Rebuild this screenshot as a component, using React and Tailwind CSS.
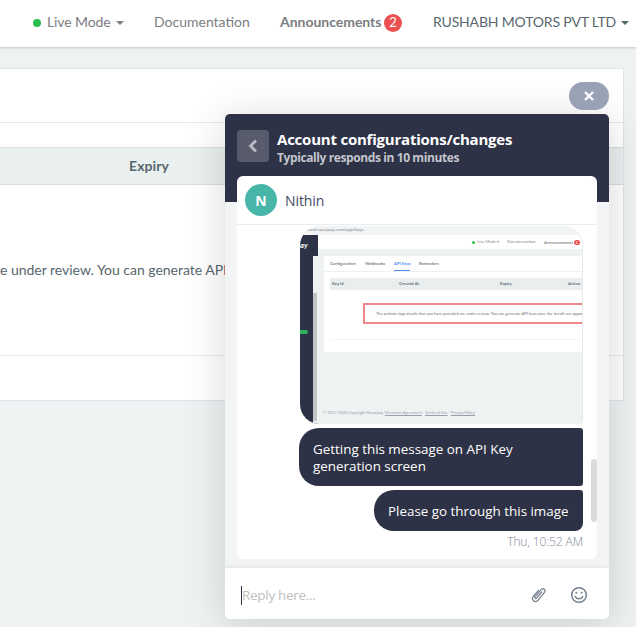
import React from "react";

function Caret({ className }) {
  return (
    <svg width="8" height="4" viewBox="0 0 8 4" className={className}>
      <path d="M0 0h8L4 4z" fill="currentColor" />
    </svg>
  );
}

function Navbar() {
  return (
    <header className="flex h-12 shrink-0 items-center whitespace-nowrap border-b border-[#d3d6d8] bg-white pb-1 pl-[33px] text-[14px] text-[#7b7d7f] shadow-[0_1px_1px_rgba(0,0,0,0.06)]">
      <span className="mt-0.5 size-2 rounded-full bg-[#28bf50]" />
      <span className="ml-[6px] w-[69px] tracking-[-0.1px]">Live Mode</span>
      <Caret className="mt-0.5" />
      <span className="ml-[30px] w-[126px]">Documentation</span>
      <span className="w-[104px] font-bold tracking-[-0.03px]">Announcements</span>
      <span className="mt-0.5 flex size-[18px] items-center justify-center rounded-full bg-[#ea5050] text-[13px] text-white">2</span>
      <span className="ml-[31px] w-[188px] tracking-[-0.17px] text-[#58666e]">RUSHABH MOTORS PVT LTD</span>
      <Caret className="mt-0.5 shrink-0 text-[#58666e]" />
    </header>
  );
}

function KeysPanel() {
  return (
    <main className="mt-5 mr-3 flex h-[333px] flex-col border border-l-0 border-[#dee5e7] bg-white text-[14px] text-[#58666e]">
      <div className="h-[54px] shrink-0 border-b border-[#e4eaec]" />
      <div className="mt-6 flex h-[38px] shrink-0 items-center border-y border-[#d5dfde] bg-[#e9f0ef] pb-0.5 pl-[129px] font-bold tracking-[0.1px]">Expiry</div>
      <div className="flex h-[171px] shrink-0 items-center whitespace-nowrap border-b border-[#e6ecec] pb-0.5">
        <span className="tracking-[-0.02px]">e under review. You can generate API</span>
      </div>
    </main>
  );
}

function Thumbnail() {
  return (
    <div className="ml-[63px] mt-px flex h-[198px] w-[283px] shrink-0 flex-col overflow-hidden whitespace-nowrap rounded-l-[20px] rounded-tr-[20px] rounded-br-[4px] border-r border-[#e6eaec] bg-[#eef2f3] font-[Lato,sans-serif] text-[4px] leading-none text-[#6c7177]">
      <div className="h-[9px] shrink-0 bg-[#f1f3f4] pl-[4px] pt-[2px] font-['Open_Sans',sans-serif] text-[4.2px] tracking-[0.03px]">board.razorpay.com/app/keys</div>
      <div className="flex h-[189px]">
        <div className="flex w-[18px] shrink-0 flex-col bg-[#2e3246]">
          <div className="h-[21px] pt-[7px] text-[7.5px] font-bold italic text-white">ay</div>
          <div className="flex h-[168px]">
            <div className="w-[13px] pt-[74px]">
              <div className="h-1 w-2 rounded-r-full bg-[#2eb458]" />
            </div>
            <div className="w-[5px] bg-[#f0f1f2] pt-[37px]">
              <div className="h-[128px] w-1 bg-[#c2c4c6]" />
            </div>
          </div>
        </div>
        <div className="flex w-[265px] shrink-0 flex-col">
          <div className="flex h-[14px] shrink-0 items-center bg-white pl-[154px] pt-px text-[#85898d]">
            <span className="size-[3px] rounded-full bg-[#28bf50]" />
            <span className="ml-[2px] w-[30px] text-[4.2px]">Live Mode ▾</span>
            <span className="w-[37px] text-[4.2px]">Documentation</span>
            <span className="w-[30px] font-bold">Announcements</span>
            <span className="flex size-[5.5px] shrink-0 items-center justify-center rounded-full bg-[#ea5050] text-white">2</span>
          </div>
          <div className="ml-[6px] mt-[7px] flex h-[96px] shrink-0 flex-col overflow-hidden bg-white">
            <div className="flex h-4 shrink-0 items-end border-b border-[#edf1f2] pl-[6px] text-[4.2px] font-bold text-[#7c8187]">
              <span className="w-[35px] pb-[5px]">Configuration</span>
              <span className="w-[29px] pb-[5px]">Webhooks</span>
              <span className="mr-[9px] w-4 border-b border-[#528ff0] pb-[4px] text-[#528ff0]">API Keys</span>
              <span className="pb-[5px]">Reminders</span>
            </div>
            <div className="ml-[6px] mt-[6px] flex h-3 shrink-0 items-center bg-[#e9eeef] pl-[2px] text-[4.2px] font-bold">
              <span className="w-[67px]">Key Id</span>
              <span className="w-[101px]">Created At</span>
              <span className="w-[68px]">Expiry</span>
              <span>Action</span>
            </div>
            <div className="ml-[39px] mt-[13px] flex h-[21px] w-[230px] shrink-0 items-center border-2 border-[#f1868b] pl-[11px] text-[4px] tracking-[-0.01px]">
              The website/app details that you have provided are under review. You can generate API keys once the details are appro
            </div>
            <div className="ml-[6px] mt-[15px] h-px bg-[#f2f4f5]" />
          </div>
          <div className="mt-[59px] pl-[5px] text-[4px] text-[#9a9eac]">
            © 2017-2020 Copyright Razorpay. <u>Merchant Agreement</u> · <u>Terms of Use</u> · <u>Privacy Policy</u>
          </div>
        </div>
      </div>
    </div>
  );
}

function Conversation() {
  return (
    <section className="mx-3 flex h-[383px] flex-col overflow-hidden rounded-md bg-white">
      <div className="flex h-[49px] shrink-0 items-center border-b border-[#e8edf0] pl-2">
        <span className="flex size-8 items-center justify-center rounded-full bg-[#47b5a8] text-[14px] font-bold text-white">N</span>
        <span className="ml-2 text-[14px] tracking-[-0.1px] text-[#414a63]">Nithin</span>
      </div>
      <div className="flex h-[334px]">
        <div className="flex w-[346px] shrink-0 flex-col text-[13.4px] text-white">
          <Thumbnail />
          <div className="mt-1 flex h-[58px] w-[284px] shrink-0 items-center self-end whitespace-nowrap rounded-l-[20px] rounded-r-[3px] bg-[#2e3246] pl-[14px] pt-px leading-[17px]">
            <p>
              Getting this message on API Key
              <br />
              generation screen
            </p>
          </div>
          <div className="mt-1 flex h-[41px] w-[209px] shrink-0 items-center self-end whitespace-nowrap rounded-l-[20px] rounded-tr-[3px] rounded-br-[8px] bg-[#2e3246] pl-[14px] pt-0.5">
            Please go through this image
          </div>
          <time className="mt-[3px] self-end whitespace-nowrap text-[12px] font-light leading-4 tracking-[-0.1px] text-[#7f8799]">Thu, 10:52 AM</time>
        </div>
        <div className="ml-2 mt-[234px] h-[63px] w-1.5 rounded-full bg-[#dbdbdb]" />
      </div>
    </section>
  );
}

function ChatWidget() {
  return (
    <aside className="absolute left-[225px] top-[114px] flex h-[505px] w-[384px] flex-col overflow-hidden rounded-[5px] bg-[#f3f4f6] font-['Open_Sans','Noto_Sans',sans-serif] shadow-[0_5px_40px_rgba(0,0,0,0.16)]">
      <div className="flex h-[88px] shrink-0 bg-[#2e3246] pl-3 pt-4">
        <button className="flex size-8 items-center justify-center rounded bg-[#585b6b] text-[#b9bbc4]">
          <svg width="10" height="14" viewBox="0 0 10 14" fill="none" stroke="currentColor" strokeWidth="2.8">
            <path d="M8 1.5 2.5 7 8 12.5" />
          </svg>
        </button>
        <div className="-mt-px ml-2 whitespace-nowrap font-bold">
          <h1 className="text-[15px] leading-5 tracking-[-0.22px] text-white">Account configurations/changes</h1>
          <p className="pt-px text-[12px] leading-4 tracking-[-0.4px] text-[#c3c5cd]">Typically responds in 10 minutes</p>
        </div>
      </div>
      <div className="-mt-[26px]">
        <Conversation />
      </div>
      <div className="z-10 mt-auto flex h-[51px] shrink-0 items-center bg-white pl-4 pt-[3px] shadow-[0_-1px_4px_rgba(0,0,0,0.08)]">
        <span className="h-[19px] w-px bg-[#243044]" />
        <span className="w-[289px] text-[13.5px] tracking-[-0.3px] text-[#bfbfbf]">Reply here...</span>
        <svg width="16" height="18" viewBox="0 0 16 18" fill="none" stroke="#747e8e" strokeWidth="1.2" strokeLinecap="round" strokeLinejoin="round">
          <path d="M10.7 6 5.6 12.2c-.8 1-2.5-.3-1.6-1.4l6.1-7.2c1.9-2.2 5.2.4 3.4 2.7l-6.6 8c-2.7 3.2-7.3-.5-4.7-3.8l5.3-6.2" />
        </svg>
        <svg width="18" height="18" viewBox="0 0 18 18" fill="none" stroke="#747e8e" strokeWidth="1.5" strokeLinecap="round" className="ml-[23px]">
          <circle cx="9" cy="9" r="7.3" />
          <path d="M5.3 10.6c1.6 3 5.8 3 7.4 0" />
          <circle cx="6.4" cy="6.8" r="1" fill="#747e8e" stroke="none" />
          <circle cx="11.6" cy="6.8" r="1" fill="#747e8e" stroke="none" />
        </svg>
      </div>
    </aside>
  );
}

export default function App() {
  return (
    <div className="relative h-[627px] w-[636px] overflow-hidden bg-[#eef2f3] font-[Lato,sans-serif]">
      <Navbar />
      <KeysPanel />
      <ChatWidget />
      <button className="absolute left-[569px] top-[82px] flex h-7 w-10 items-center justify-center rounded-full bg-[#99a2b4]">
        <svg width="10" height="10" viewBox="0 0 10 10" fill="none" stroke="white" strokeWidth="2.4">
          <path d="m1 1 8 8M9 1 1 9" />
        </svg>
      </button>
    </div>
  );
}
